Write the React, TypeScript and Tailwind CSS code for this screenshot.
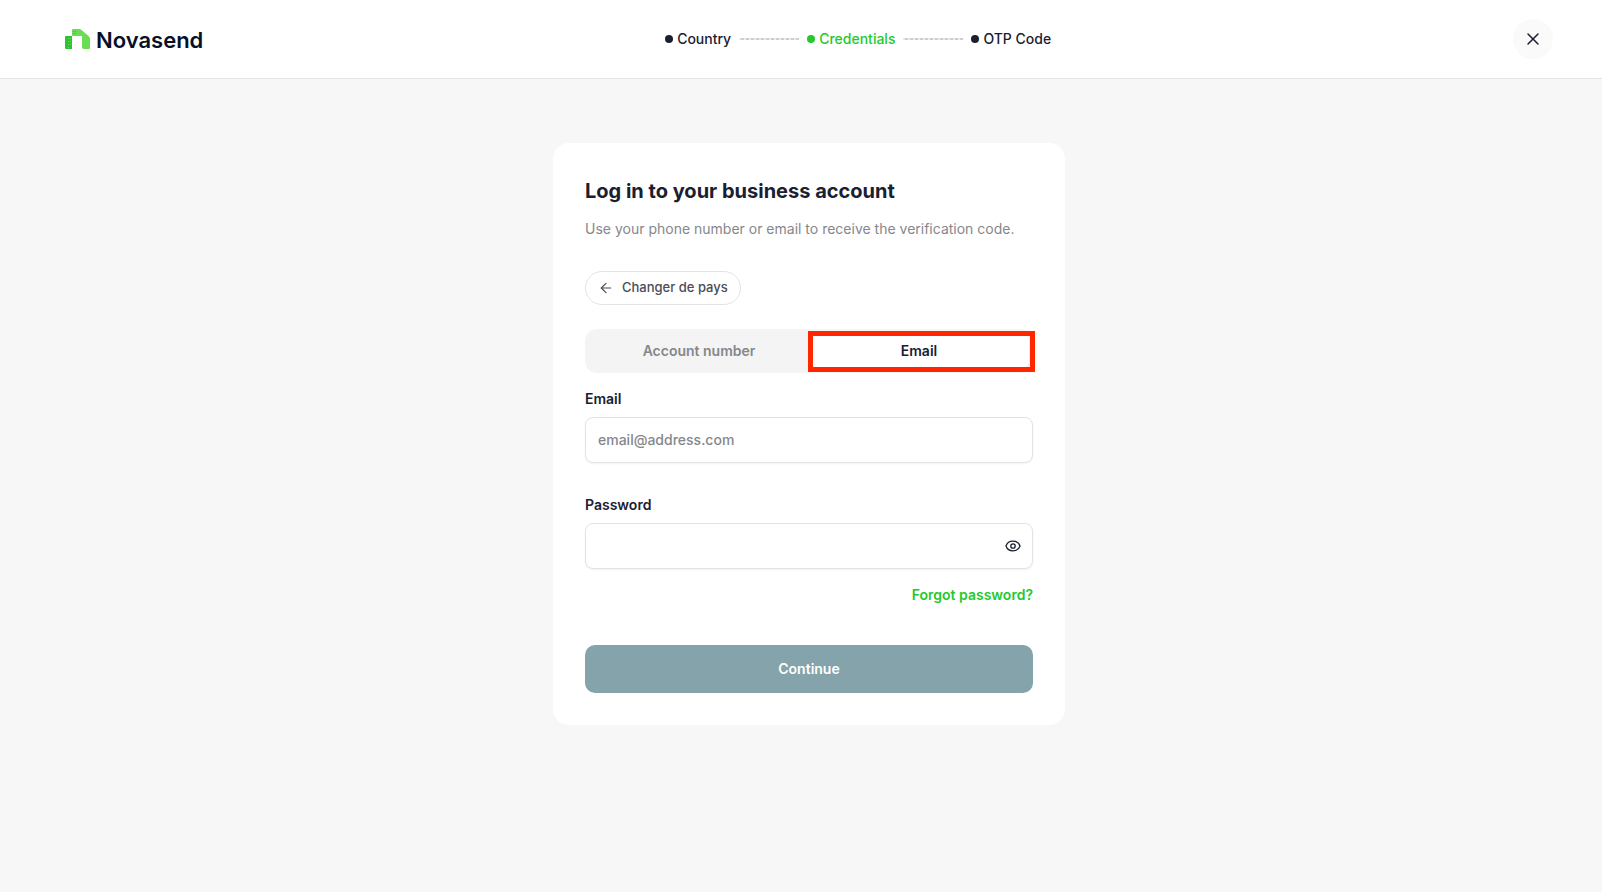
import { useState } from "react";
import { ArrowLeft, X } from "lucide-react";

const STEPS = [
  { label: "Country", active: false },
  { label: "Credentials", active: true },
  { label: "OTP Code", active: false },
];

function Logo() {
  return (
    <a href="#" className="ml-4 flex items-center gap-1.5 text-[#061127]">
      <svg width="25" height="20" viewBox="0 0 25 20" aria-hidden="true">
        <path d="M0 8a1 1 0 0 1 1-1h6v13H1a1 1 0 0 1-1-1z" fill="#2cc532" />
        <path d="M7 1a1 1 0 0 1 1-1h6q1.500 0 2.500 1l7 6q1.500 1.400 1.500 3v9a1 1 0 0 1-1 1h-5a2 2 0 0 1-2-2V7H7z" fill="#6bdd53" />
        <path
          d="M3 9h1v1H3zM5 9h1v1H5zM3 12h1v1H3zM5 12h1v1H5zM3 15h1v1H3zM5 15h1v1H5zM3 18h1v1H3z"
          fill="#5fe05a"
        />
        <path d="M8 2h1v1H8zM10 2h1v1h-1zM8 4h1v1H8zM10 4h1v1h-1z" fill="#2cc532" />
      </svg>
      <span className="pt-0.5 text-[22px] leading-6 font-semibold">Novasend</span>
    </a>
  );
}

function Stepper() {
  return (
    <ol className="flex items-center gap-2 text-sm font-medium">
      {STEPS.map((step, i) => (
        <li
          key={step.label}
          aria-current={step.active ? "step" : undefined}
          className={`flex items-center gap-2 ${step.active ? "text-[#25c92c]" : "text-[#1a2030]"}`}
        >
          {i > 0 && (
            <span className="h-0.5 w-15 bg-[repeating-linear-gradient(90deg,#e9eaeb_0_2px,#cdced0_2px_5px)]" />
          )}
          <span className="flex items-center gap-1">
            <span className="size-2 rounded-full bg-current" />
            {step.label}
          </span>
        </li>
      ))}
    </ol>
  );
}

function EyeIcon() {
  return (
    <svg width="16" height="16" viewBox="0 0 16 16" fill="none" stroke="currentColor" strokeWidth="1.3" aria-hidden="true">
      <path d="M1 8c1-3 3.800-4.800 7-4.800S14 5 15 8c-1 3-3.800 4.800-7 4.800S2 11 1 8z" />
      <circle cx="8" cy="8" r="2.200" />
    </svg>
  );
}

const INPUT =
  "h-[46px] w-full rounded-lg border border-[#e2e3e5] bg-white px-3 pb-0.5 text-sm font-medium text-[#1a2030] shadow-xs outline-none placeholder:text-[#85878c]";

export default function App() {
  const [showPassword, setShowPassword] = useState(false);

  return (
    <div className="min-h-screen bg-[#f7f7f7] font-['Inter',sans-serif] text-[#1a2030]">
      <header className="flex items-center justify-between border-b border-[#e3e4e5] bg-white px-[49px] py-[19px]">
        <Logo />
        <Stepper />
        <button type="button" aria-label="Close" className="flex size-10 items-center justify-center rounded-full bg-[#fafafa]">
          <X size={20} strokeWidth={1.8} />
        </button>
      </header>

      <main className="flex justify-center py-16 pl-4">
        <form className="w-full max-w-lg rounded-2xl bg-white p-8" onSubmit={(e) => e.preventDefault()}>
          <h1 className="mt-0.5 text-xl leading-7 font-bold">Log in to your business account</h1>
          <p className="mt-3.5 text-sm text-[#85878c]">
            Use your phone number or email to receive the verification code.
          </p>

          <button
            type="button"
            className="mt-8 flex h-[34px] items-center gap-2 rounded-full border border-[#e2e3e5] px-3 text-[13px] font-medium text-[#4a4d57]"
          >
            <ArrowLeft size={16} strokeWidth={1.8} />
            Changer de pays
          </button>

          {/* Login method */}
          <div role="tablist" className="relative mt-6 grid h-11 grid-cols-2 rounded-xl bg-[#f4f4f4] p-1 text-sm font-semibold">
            <button type="button" role="tab" aria-selected="false" className="text-[#85878c]">
              Account number
            </button>
            <button type="button" role="tab" aria-selected="true" className="rounded-lg bg-white shadow-xs">
              Email
            </button>
            <span className="pointer-events-none absolute top-0.5 -right-0.5 h-[41px] w-[227px] border-5 border-[#ff2600]" />
          </div>

          <label htmlFor="email" className="mt-4 block text-sm font-semibold">
            Email
          </label>
          <input id="email" type="email" placeholder="email@address.com" className={`mt-2 ${INPUT}`} />

          <label htmlFor="password" className="mt-8 block text-sm font-semibold">
            Password
          </label>
          <div className="relative mt-2">
            <input id="password" type={showPassword ? "text" : "password"} className={INPUT} />
            <button
              type="button"
              aria-label="Show password"
              className="absolute inset-y-0 right-3"
              onClick={() => setShowPassword(!showPassword)}
            >
              <EyeIcon />
            </button>
          </div>

          <div className="mt-4 flex justify-end">
            <a href="#" className="text-sm font-semibold text-[#25c92c]">
              Forgot password?
            </a>
          </div>

          <button type="submit" className="mt-10 h-12 w-full rounded-[10px] bg-[#84a3aa] text-sm font-semibold text-white">
            Continue
          </button>
        </form>
      </main>
    </div>
  );
}
